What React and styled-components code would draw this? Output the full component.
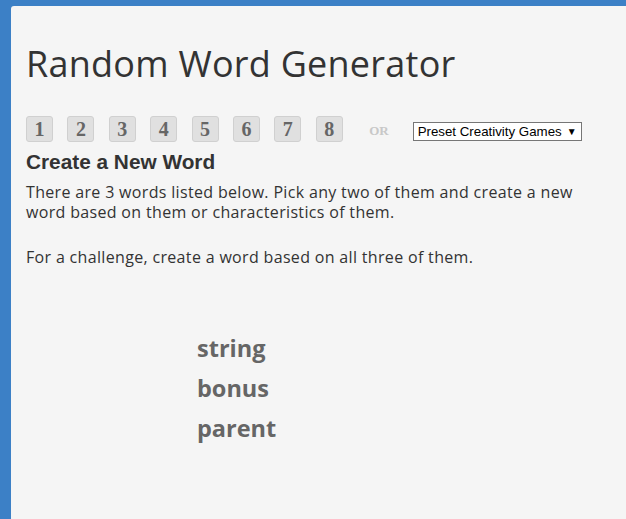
import React from "react";
import styled, { createGlobalStyle } from "styled-components";

const GlobalStyle = createGlobalStyle`
  html, body {
    margin: 0;
    padding: 0;
    background: #3c80c6;
    overflow: hidden;
  }
`;

const Page = styled.div`
  padding: 6px 0 0 11px;
  height: 100vh;
  box-sizing: border-box;
  display: flex;
  overflow: hidden;
`;

const Panel = styled.main`
  flex: 1;
  background: #f5f5f5;
  border-radius: 3px 0 0 0;
  padding: 36px 0 0 15px;
  color: #333;
  font-family: "Open Sans", sans-serif;
`;

const Title = styled.h1`
  margin: 0;
  font-size: 36px;
  font-weight: 400;
  line-height: 44px;
  letter-spacing: 0.25px;
  color: #333;
`;

const Toolbar = styled.div`
  display: flex;
  align-items: center;
  margin-top: 30px;
`;

const NumButton = styled.button`
  width: 27px;
  height: 26px;
  margin-right: 14.4px;
  padding: 0;
  background: #e0e0e0;
  border: 1px solid #d0d0d0;
  border-radius: 3px;
  color: #666;
  font-family: "Liberation Serif", serif;
  font-weight: 700;
  font-size: 20px;
  line-height: 24px;
`;

const Or = styled.span`
  margin: 0 24px 0 12px;
  font-family: "Liberation Serif", serif;
  font-weight: 700;
  font-size: 13px;
  color: #c8c8c8;
  padding-top: 4px;
`;

const SelectWrap = styled.div`
  position: relative;
  margin-top: 4px;
`;

const Select = styled.select`
  appearance: none;
  display: block;
  height: 19px;
  width: 169px;
  font-family: "Liberation Sans", Arial, sans-serif;
  font-size: 13.3px;
  border: 1px solid #767676;
  background: #fff;
  border-radius: 0;
  padding: 0 0 0 4px;
  color: #000;
`;

const Caret = styled.span`
  position: absolute;
  right: 5px;
  top: 3px;
  font-size: 10px;
  line-height: 12px;
  color: #000;
  pointer-events: none;
`;

const Heading = styled.h2`
  margin: 8px 0 0;
  font-family: "Liberation Sans", Arial, sans-serif;
  font-weight: 700;
  font-size: 20.8px;
  line-height: 24px;
  color: #333;
`;

const Text = styled.p`
  margin: 8px 0 0;
  font-size: 16px;
  line-height: 20px;
  letter-spacing: 0.33px;
  max-width: 580px;
  & + & {
    margin-top: 25px;
  }
`;

const WordList = styled.ul`
  list-style: none;
  margin: 61px 0 0 171px;
  padding: 0;
`;

const Word = styled.li`
  font-size: 23.5px;
  font-weight: 700;
  line-height: 40px;
  color: #666;
`;

export default function App() {
  const words = ["string", "bonus", "parent"];
  return (
    <>
      <GlobalStyle />
      <Page>
        <Panel>
          <Title>Random Word Generator</Title>
          <Toolbar>
            {[1, 2, 3, 4, 5, 6, 7, 8].map((n) => (
              <NumButton key={n}>{n}</NumButton>
            ))}
            <Or>OR</Or>
            <SelectWrap>
              <Select defaultValue="preset">
                <option value="preset">Preset Creativity Games</option>
              </Select>
              <Caret>▼</Caret>
            </SelectWrap>
          </Toolbar>
          <Heading>Create a New Word</Heading>
          <Text>
            There are 3 words listed below. Pick any two of them and create a
            new word based on them or characteristics of them.
          </Text>
          <Text>For a challenge, create a word based on all three of them.</Text>
          <WordList>
            {words.map((w) => (
              <Word key={w}>{w}</Word>
            ))}
          </WordList>
        </Panel>
      </Page>
    </>
  );
}
